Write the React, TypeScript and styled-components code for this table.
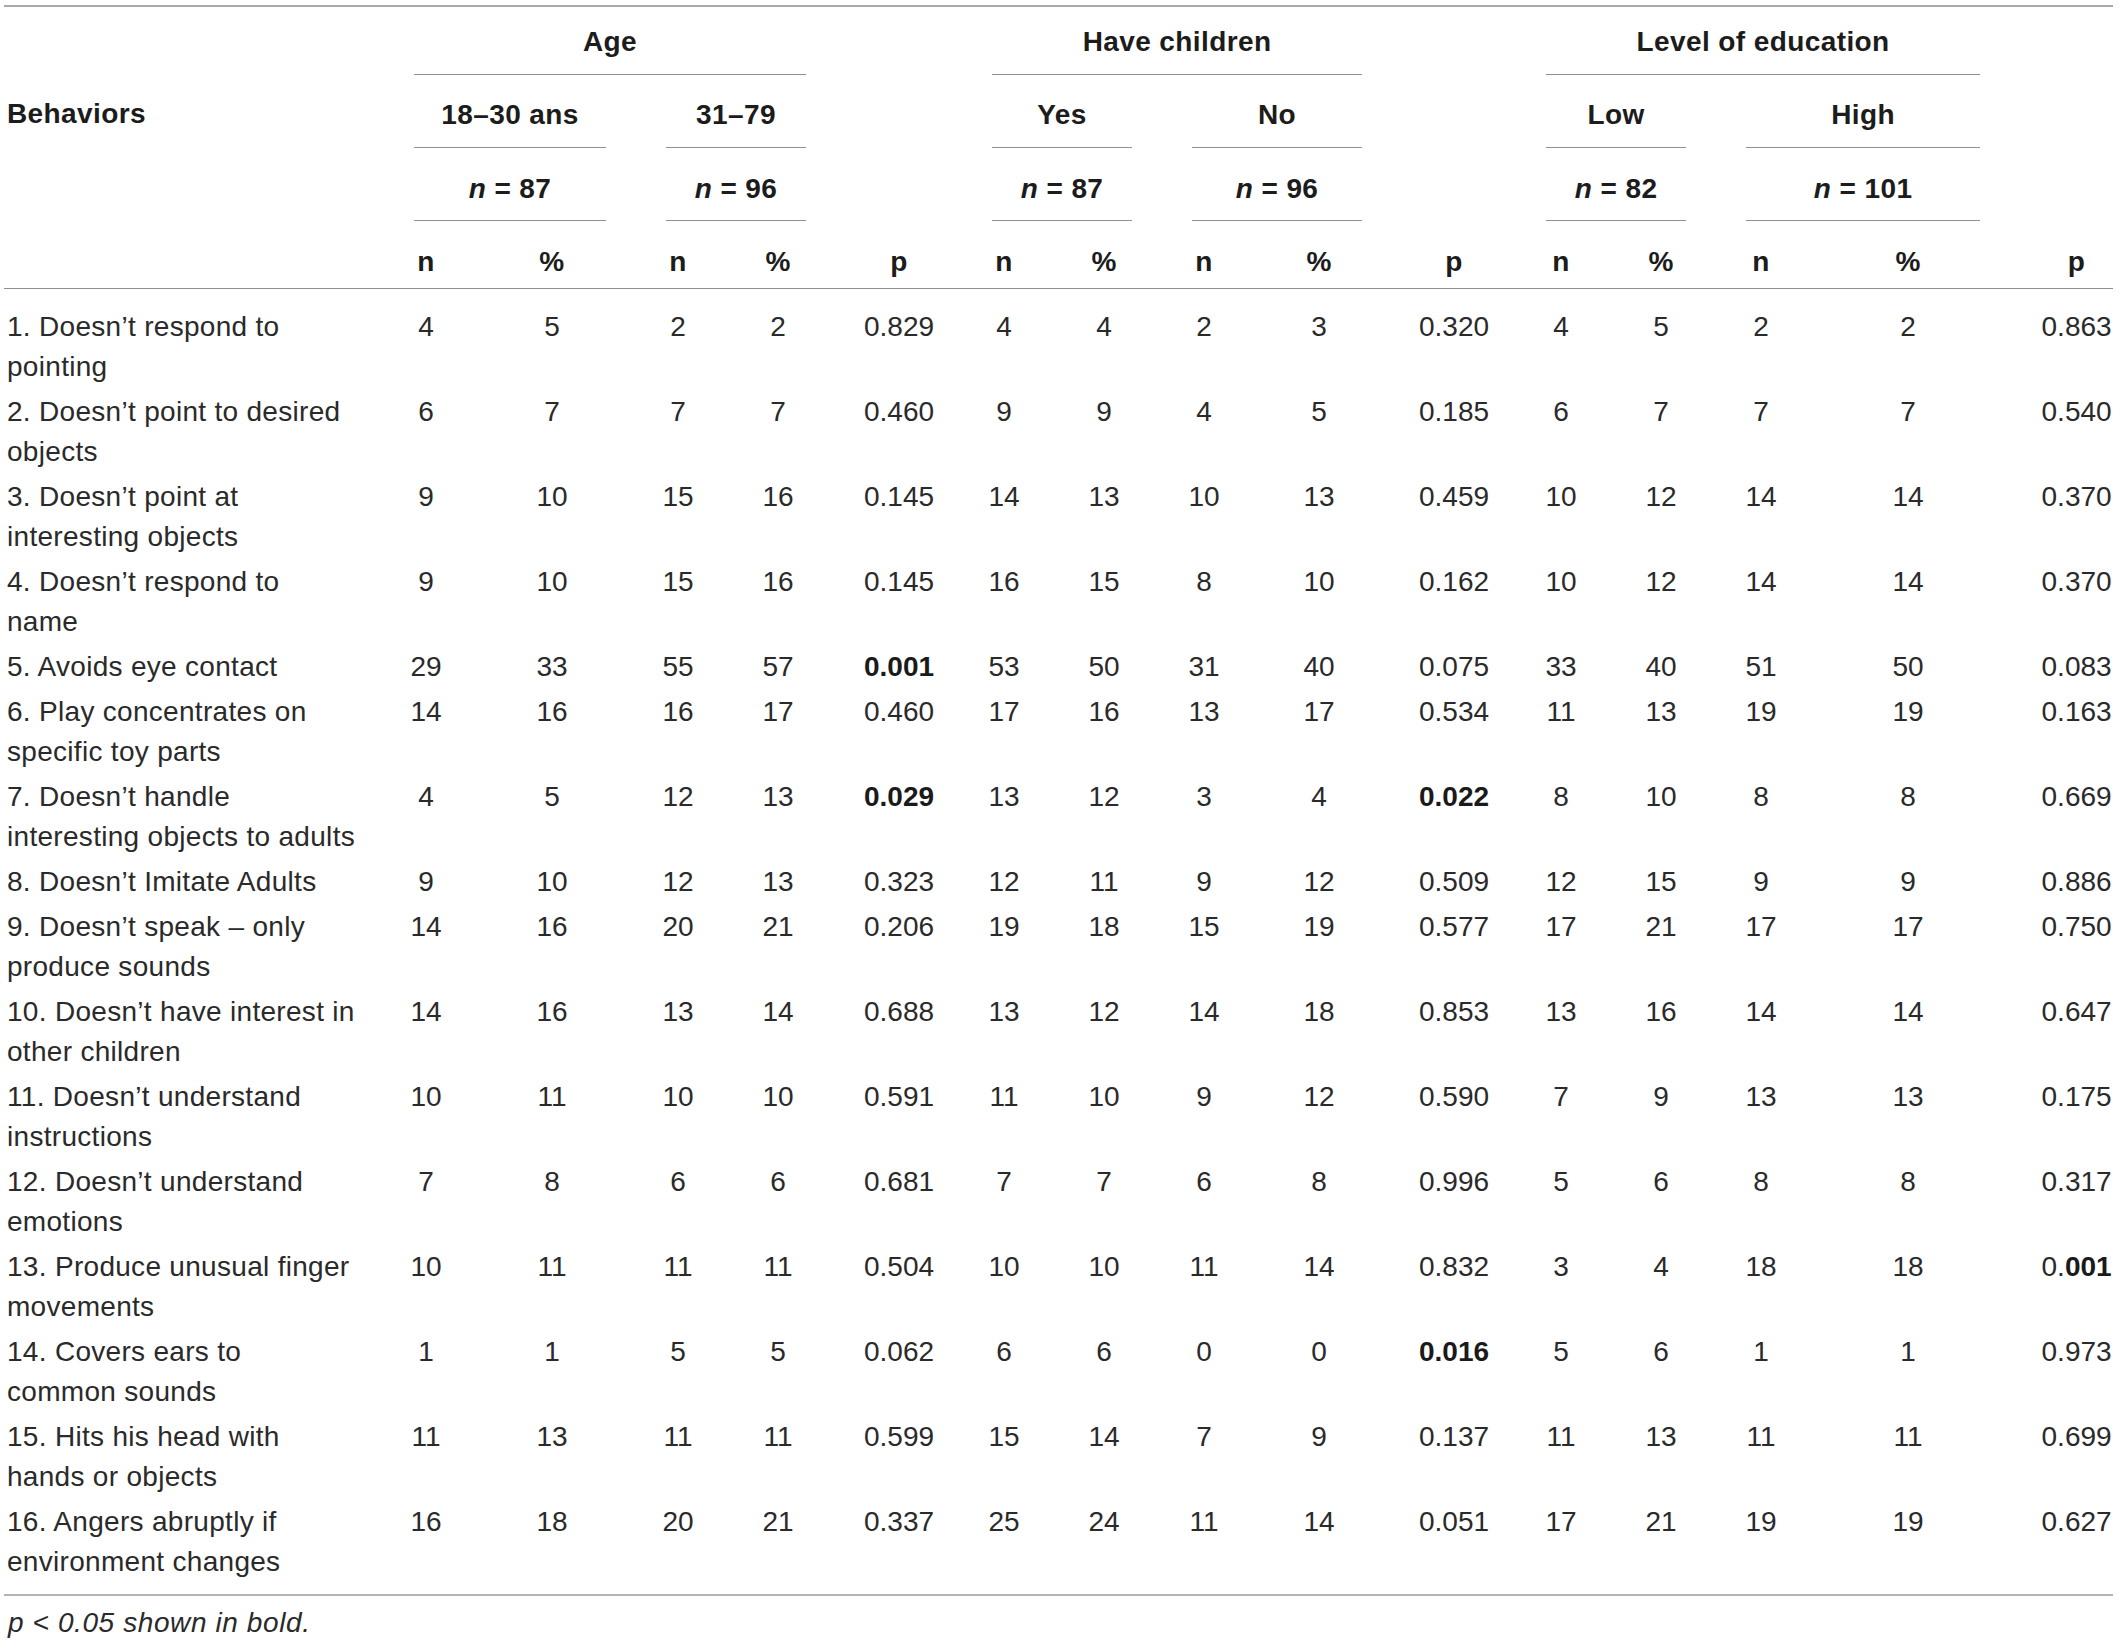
import React from 'react';
import styled, { createGlobalStyle } from 'styled-components';

const GlobalStyle = createGlobalStyle`
  html, body { margin: 0; padding: 0; background: #ffffff; }
`;

const Page = styled.div`
  padding: 5px 6px 0 4px;
  font-family: "Liberation Sans", Arial, Helvetica, sans-serif;
  color: #2a2a2a;
`;

const Table = styled.table`
  width: 2109px;
  table-layout: fixed;
  border-collapse: separate;
  border-spacing: 0;
  border-top: 2px solid #a8a8a8;
  border-bottom: 2px solid #b3b3b3;
  font-size: 28px;
  line-height: 40px;
`;

const HeadCell = styled.th<{ $pt: number; $pb?: number; $rule?: boolean }>`
  padding: ${p => p.$pt}px 0 ${p => p.$pb ?? 0}px 0;
  font-weight: 700;
  color: #1c1c1c;
  letter-spacing: 0.4px;
  text-align: center;
  vertical-align: top;
  white-space: nowrap;
  border-bottom: ${p => (p.$rule ? '1px solid #8f8f8f' : 'none')};
  &:last-child { padding-left: ${p => (p.$rule ? 30 : 0)}px; }
`;

const BehaviorHead = styled.th`
  padding: 0 0 0 3px;
  font-weight: 700;
  color: #1c1c1c;
  letter-spacing: 0.4px;
  text-align: left;
  vertical-align: middle;
`;

const GroupLabel = styled.div<{ $pb: number }>`
  margin: 0 30px;
  padding-bottom: ${p => p.$pb}px;
  border-bottom: 1px solid #8f8f8f;
  line-height: 40px;
`;

const DataRow = styled.tr`
  &:first-child > td { padding-top: 18px; }
  &:last-child > td { padding-bottom: 12px; }
`;

const DataCell = styled.td`
  padding: 2.5px 0;
  text-align: center;
  vertical-align: top;
  white-space: nowrap;
  &:last-child { padding-left: 30px; }
`;

const BehaviorCell = styled.td`
  padding: 2.5px 0 2.5px 3px;
  text-align: left;
  vertical-align: top;
  white-space: nowrap;
  letter-spacing: 0.3px;
`;

const Strong = styled.span`
  font-weight: 700;
  color: #1a1a1a;
`;

const Note = styled.p`
  margin: 7px 0 0 4px;
  font-family: "Liberation Sans", Arial, Helvetica, sans-serif;
  font-style: italic;
  font-size: 28px;
  line-height: 40px;
  letter-spacing: 0.6px;
  color: #2a2a2a;
`;

const colWidths = [380, 84, 168, 84, 116, 126, 84, 116, 84, 146, 124, 90, 110, 90, 204, 103];

const groups = [
  { label: 'Age', subs: [{ label: '18–30 ans', n: '87' }, { label: '31–79', n: '96' }] },
  { label: 'Have children', subs: [{ label: 'Yes', n: '87' }, { label: 'No', n: '96' }] },
  { label: 'Level of education', subs: [{ label: 'Low', n: '82' }, { label: 'High', n: '101' }] },
];

type P = { v: string; b?: 'all' | 'tail' };
type Row = { lines: string[]; cells: (string | P)[] };

const rows: Row[] = [
  { lines: ['1. Doesn’t respond to', 'pointing'], cells: ['4', '5', '2', '2', { v: '0.829' }, '4', '4', '2', '3', { v: '0.320' }, '4', '5', '2', '2', { v: '0.863' }] },
  { lines: ['2. Doesn’t point to desired', 'objects'], cells: ['6', '7', '7', '7', { v: '0.460' }, '9', '9', '4', '5', { v: '0.185' }, '6', '7', '7', '7', { v: '0.540' }] },
  { lines: ['3. Doesn’t point at', 'interesting objects'], cells: ['9', '10', '15', '16', { v: '0.145' }, '14', '13', '10', '13', { v: '0.459' }, '10', '12', '14', '14', { v: '0.370' }] },
  { lines: ['4. Doesn’t respond to', 'name'], cells: ['9', '10', '15', '16', { v: '0.145' }, '16', '15', '8', '10', { v: '0.162' }, '10', '12', '14', '14', { v: '0.370' }] },
  { lines: ['5. Avoids eye contact'], cells: ['29', '33', '55', '57', { v: '0.001', b: 'all' }, '53', '50', '31', '40', { v: '0.075' }, '33', '40', '51', '50', { v: '0.083' }] },
  { lines: ['6. Play concentrates on', 'specific toy parts'], cells: ['14', '16', '16', '17', { v: '0.460' }, '17', '16', '13', '17', { v: '0.534' }, '11', '13', '19', '19', { v: '0.163' }] },
  { lines: ['7. Doesn’t handle', 'interesting objects to adults'], cells: ['4', '5', '12', '13', { v: '0.029', b: 'all' }, '13', '12', '3', '4', { v: '0.022', b: 'all' }, '8', '10', '8', '8', { v: '0.669' }] },
  { lines: ['8. Doesn’t Imitate Adults'], cells: ['9', '10', '12', '13', { v: '0.323' }, '12', '11', '9', '12', { v: '0.509' }, '12', '15', '9', '9', { v: '0.886' }] },
  { lines: ['9. Doesn’t speak – only', 'produce sounds'], cells: ['14', '16', '20', '21', { v: '0.206' }, '19', '18', '15', '19', { v: '0.577' }, '17', '21', '17', '17', { v: '0.750' }] },
  { lines: ['10. Doesn’t have interest in', 'other children'], cells: ['14', '16', '13', '14', { v: '0.688' }, '13', '12', '14', '18', { v: '0.853' }, '13', '16', '14', '14', { v: '0.647' }] },
  { lines: ['11. Doesn’t understand', 'instructions'], cells: ['10', '11', '10', '10', { v: '0.591' }, '11', '10', '9', '12', { v: '0.590' }, '7', '9', '13', '13', { v: '0.175' }] },
  { lines: ['12. Doesn’t understand', 'emotions'], cells: ['7', '8', '6', '6', { v: '0.681' }, '7', '7', '6', '8', { v: '0.996' }, '5', '6', '8', '8', { v: '0.317' }] },
  { lines: ['13. Produce unusual finger', 'movements'], cells: ['10', '11', '11', '11', { v: '0.504' }, '10', '10', '11', '14', { v: '0.832' }, '3', '4', '18', '18', { v: '0.001', b: 'tail' }] },
  { lines: ['14. Covers ears to', 'common sounds'], cells: ['1', '1', '5', '5', { v: '0.062' }, '6', '6', '0', '0', { v: '0.016', b: 'all' }, '5', '6', '1', '1', { v: '0.973' }] },
  { lines: ['15. Hits his head with', 'hands or objects'], cells: ['11', '13', '11', '11', { v: '0.599' }, '15', '14', '7', '9', { v: '0.137' }, '11', '13', '11', '11', { v: '0.699' }] },
  { lines: ['16. Angers abruptly if', 'environment changes'], cells: ['16', '18', '20', '21', { v: '0.337' }, '25', '24', '11', '14', { v: '0.051' }, '17', '21', '19', '19', { v: '0.627' }] },
];

const PValue: React.FC<{ p: P }> = ({ p }) => {
  if (p.b === 'all') return <Strong>{p.v}</Strong>;
  if (p.b === 'tail') return <>{p.v.slice(0, 2)}<Strong>{p.v.slice(2)}</Strong></>;
  return <>{p.v}</>;
};

export default function App() {
  return (
    <Page>
      <GlobalStyle />
      <Table>
        <colgroup>
          {colWidths.map((w, i) => <col key={i} style={{ width: w }} />)}
        </colgroup>
        <thead>
          <tr>
            <BehaviorHead rowSpan={3}>Behaviors</BehaviorHead>
            {groups.map(g => (
              <React.Fragment key={g.label}>
                <HeadCell $pt={15} colSpan={4}><GroupLabel $pb={12}>{g.label}</GroupLabel></HeadCell>
                <HeadCell $pt={15} rowSpan={3} />
              </React.Fragment>
            ))}
          </tr>
          <tr>
            {groups.flatMap(g => g.subs.map(s => (
              <HeadCell key={g.label + s.label} $pt={20} colSpan={2}><GroupLabel $pb={12}>{s.label}</GroupLabel></HeadCell>
            )))}
          </tr>
          <tr>
            {groups.flatMap(g => g.subs.map(s => (
              <HeadCell key={g.label + s.label + 'n'} $pt={21} colSpan={2}>
                <GroupLabel $pb={11}><i>n</i> = {s.n}</GroupLabel>
              </HeadCell>
            )))}
          </tr>
          <tr>
            <HeadCell $pt={21} $pb={6} $rule />
            {groups.flatMap(g => ['n', '%', 'n', '%', 'p'].map((t, i) => (
              <HeadCell key={g.label + i} $pt={21} $pb={6} $rule>{t}</HeadCell>
            )))}
          </tr>
        </thead>
        <tbody>
          {rows.map((r, ri) => (
            <DataRow key={ri}>
              <BehaviorCell>
                {r.lines.map((l, li) => (
                  <React.Fragment key={li}>{li > 0 && <br />}{l}</React.Fragment>
                ))}
              </BehaviorCell>
              {r.cells.map((c, ci) => (
                <DataCell key={ci}>{typeof c === 'string' ? c : <PValue p={c} />}</DataCell>
              ))}
            </DataRow>
          ))}
        </tbody>
      </Table>
      <Note>p &lt; 0.05 shown in bold.</Note>
    </Page>
  );
}
